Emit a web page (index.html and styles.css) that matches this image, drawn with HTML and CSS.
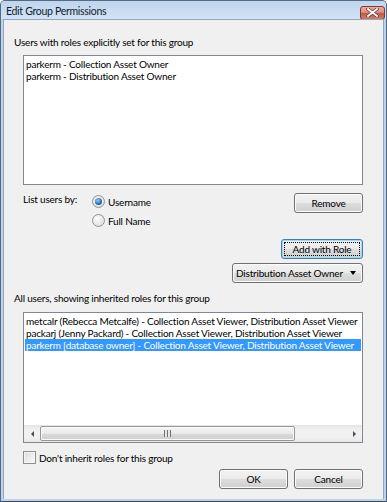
FILE: index.html
```html
<!doctype html>
<html lang="en">
<head>
	<meta charset="UTF-8">
	<title>Edit Group Permissions</title>
	<link rel="stylesheet" href="styles.css">
</head>
<body>
	<div class="window">
		<div class="titlebar">
			<span class="title">Edit Group Permissions</span>
			<span class="close">
				<svg width="13" height="9" viewBox="0 0 13 9">
					<path d="M2 1 L11 8 M11 1 L2 8" stroke="#6b3a34" stroke-width="3.4" stroke-linecap="square"/>
					<path d="M2 1 L11 8 M11 1 L2 8" stroke="#fff" stroke-width="1.8" stroke-linecap="square"/>
				</svg>
			</span>
		</div>
		<div class="content">
			<div class="label">Users with roles explicitly set for this group</div>
			<div class="listbox explicit">
				<div class="item">parkerm - Collection Asset Owner</div>
				<div class="item">parkerm - Distribution Asset Owner</div>
			</div>

			<div class="controls">
				<div class="listby">
					<span class="listby-label">List users by:</span>
					<div class="radios">
						<div class="radio checked"><span class="dot"></span>Username</div>
						<div class="radio"><span class="dot"></span>Full Name</div>
					</div>
				</div>
				<div class="actions">
					<div class="btn remove">Remove</div>
					<div class="btn default add"><span class="focus">Add with Role</span></div>
					<div class="select">
						<span>Distribution Asset Owner</span>
						<span class="caret"></span>
					</div>
				</div>
			</div>

			<div class="label label-all">All users, showing inherited roles for this group</div>
			<div class="listbox inherited">
				<div class="rows">
					<div class="item">metcalr (Rebecca Metcalfe) - Collection Asset Viewer, Distribution Asset Viewer</div>
					<div class="item">packarj (Jenny Packard) - Collection Asset Viewer, Distribution Asset Viewer</div>
					<div class="item selected">parkerm [database owner] - Collection Asset Viewer, Distribution Asset Viewer</div>
				</div>
				<div class="hscroll">
					<span class="arrow-btn"><span class="tri-left"></span></span>
					<span class="thumb"><span class="grip"></span></span>
					<span class="track"></span>
					<span class="arrow-btn"><span class="tri-right"></span></span>
				</div>
			</div>

			<div class="check"><span class="box"></span>Don't inherit roles for this group</div>

			<div class="footer">
				<div class="btn">OK</div>
				<div class="btn">Cancel</div>
			</div>
		</div>
	</div>
</body>
</html>
```
FILE: styles.css
```css
* {
	box-sizing: border-box;
}
body {
	margin: 0;
	font-family: Lato, "Liberation Sans", sans-serif;
	font-size: 10px;
	letter-spacing: -0.2px;
	color: #000;
}
.window {
	width: 387px;
	height: 502px;
	display: flex;
	flex-direction: column;
	border: 1px solid #566a82;
	border-bottom-color: #3a4a5c;
	border-radius: 5px 5px 0 0;
	background: #bcd3ec;
	padding: 0 2px 2px 2px;
}
.titlebar {
	height: 18px;
	display: flex;
	align-items: center;
	justify-content: space-between;
	background: linear-gradient(#bfd5ee, #d2e3f4);
	margin: 0 -2px;
	padding: 0 1px 0 5px;
	border-radius: 4px 4px 0 0;
}
.title {
	font-size: 10.5px;
	letter-spacing: -0.3px;
	color: #101c2a;
	margin-top: 1px;
}
.close {
	width: 25px;
	height: 14px;
	margin-top: 5px;
	display: flex;
	align-items: center;
	justify-content: center;
	border: 1px solid #7a3b33;
	border-radius: 3px;
	background: linear-gradient(#eeaa9e 0%, #e08c80 45%, #c25a45 50%, #d07a64 100%);
}
.close svg {
	display: block;
}
.content {
	flex: 1;
	background: #f0f0f0;
	border: 1px solid #8fa8c6;
	border-bottom: none;
	padding: 16px 20px 0 10px;
}
.label {
	line-height: 12px;
	height: 12px;
	white-space: nowrap;
}
.listbox {
	margin-left: 9px;
	background: #fff;
	border: 1px solid #828790;
	line-height: 12px;
	white-space: nowrap;
	overflow: hidden;
}
.listbox .item {
	height: 12px;
	padding-left: 2px;
}
.explicit {
	margin-top: 7px;
	height: 130px;
	padding-top: 2px;
}
.inherited {
	margin-top: 8px;
	height: 131px;
	display: flex;
	flex-direction: column;
}
.rows {
	flex: 1;
	padding: 2px 0 0 1px;
}
.inherited .item {
	padding-left: 1px;
	margin-right: 1px;
}
.item.selected {
	background: #3399ff;
	color: #fff;
}
.hscroll {
	height: 17px;
	display: flex;
	align-items: stretch;
	background: linear-gradient(#e5e5e5, #f1f1f1 30%, #f1f1f1 70%, #e8e8e8);
}
.arrow-btn {
	width: 16px;
	display: flex;
	align-items: center;
	justify-content: center;
}
.tri-left {
	border-right: 3px solid #4d4d4d;
	border-top: 3px solid transparent;
	border-bottom: 3px solid transparent;
}
.tri-right {
	border-left: 3px solid #4d4d4d;
	border-top: 3px solid transparent;
	border-bottom: 3px solid transparent;
}
.thumb {
	width: 255px;
	margin: 1px 0;
	border: 1px solid #979797;
	border-radius: 2px;
	background: linear-gradient(#f6f6f6, #e9e9e9 50%, #d9d9d9 51%, #cfcfcf);
	box-shadow: inset 0 0 0 1px #fbfbfb;
	display: flex;
	align-items: center;
	justify-content: center;
}
.grip {
	width: 7px;
	height: 7px;
	background: repeating-linear-gradient(90deg, #6f6f6f 0 1px, #e6e6e6 1px 3px);
}
.track {
	flex: 1;
}
.controls {
	margin-top: 7px;
	display: flex;
	justify-content: space-between;
	padding-left: 9px;
}
.listby {
	display: flex;
}
.listby-label {
	line-height: 12px;
	margin-top: 1px;
	width: 69px;
}
.radio {
	height: 19px;
	display: flex;
	align-items: center;
}
.radio .dot {
	width: 13px;
	height: 13px;
	margin-right: 3px;
	border: 1px solid #929292;
	border-radius: 50%;
	background: radial-gradient(circle at 40% 35%, #fdfdfd, #d6d6d6);
	display: flex;
	align-items: center;
	justify-content: center;
}
.radio.checked .dot::after {
	content: "";
	width: 7px;
	height: 7px;
	border-radius: 50%;
	background: radial-gradient(circle at 40% 35%, #8fcff5, #2b6aa8 60%, #1a4c86);
}
.actions {
	display: flex;
	flex-direction: column;
	align-items: flex-end;
	padding-top: 1px;
}
.btn {
	height: 20px;
	width: 69px;
	display: flex;
	align-items: center;
	justify-content: center;
	border: 1px solid #707070;
	border-radius: 3px;
	background: linear-gradient(#f2f2f2, #ebebeb 48%, #dddddd 52%, #cfcfcf);
	box-shadow: inset 0 0 0 1px #fcfcfc;
	padding-bottom: 1px;
}
.btn.add {
	width: 82px;
	margin-top: 26px;
	border-color: #3c7fb1;
	box-shadow: inset 0 0 0 1px #9fd8f3;
	padding: 2px;
}
.btn .focus {
	flex: 1;
	align-self: stretch;
	display: flex;
	align-items: center;
	justify-content: center;
	outline: 1px dotted #000;
	outline-offset: -1px;
	padding-bottom: 1px;
}
.select {
	margin-top: 4px;
	width: 131px;
	height: 20px;
	display: flex;
	align-items: center;
	justify-content: space-between;
	padding: 0 6px 1px 3px;
	border: 1px solid #707070;
	border-radius: 3px;
	background: linear-gradient(#f2f2f2, #ebebeb 48%, #dddddd 52%, #cfcfcf);
	box-shadow: inset 0 0 0 1px #fcfcfc;
	white-space: nowrap;
}
.caret {
	border-top: 4px solid #000;
	border-left: 3.5px solid transparent;
	border-right: 3.5px solid transparent;
	margin-top: 1px;
}
.label-all {
	margin-top: 9px;
}
.check {
	margin-top: 8px;
	margin-left: 9px;
	height: 13px;
	display: flex;
	align-items: center;
	white-space: nowrap;
}
.check .box {
	width: 13px;
	height: 13px;
	margin-right: 3px;
	border: 1px solid #8e8f8f;
	background: linear-gradient(135deg, #dcdcdc, #fbfbfb);
	box-shadow: inset 0 0 0 1px #f4f4f4;
}
.footer {
	margin-top: 5px;
	display: flex;
	justify-content: flex-end;
	gap: 6px;
}
```
